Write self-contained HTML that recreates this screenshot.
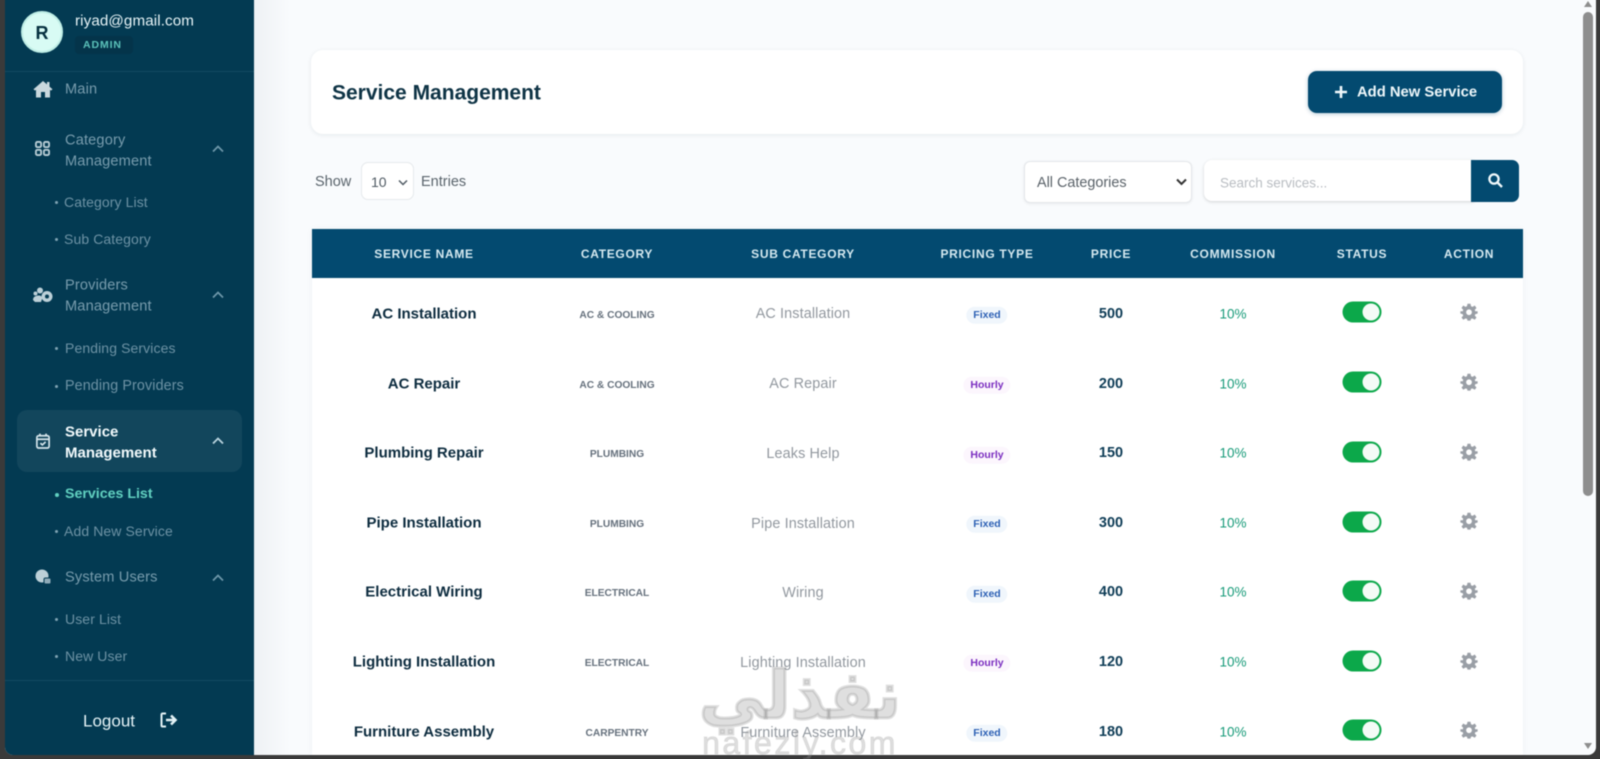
<!DOCTYPE html>
<html lang="en">
<head>
<meta charset="utf-8">
<title>Service Management</title>
<style>
html,body{margin:0;padding:0;width:1600px;height:759px;overflow:hidden;background:#3a3a3a;font-family:"Liberation Sans",sans-serif}
#p{position:absolute;left:0;top:0;width:1600px;height:759px;background:#3a3a3a;filter:blur(.4px)}
#m{position:absolute;left:5px;top:-10px;width:1591px;height:765px;background:#f9fbfd;border-radius:0 0 8px 8px;overflow:hidden}
.a{position:absolute;white-space:nowrap;transform:translateY(-50%);line-height:1}
.c{position:absolute;white-space:nowrap;transform:translate(-50%,-50%);line-height:1}
.s{color:#789cad;font-size:14.6px;letter-spacing:.15px}
.sub{color:#6d92a4;font-size:14px;letter-spacing:.1px}
.dot{position:absolute;width:3px;height:3px;border-radius:50%;background:#7fa3b3}
.h{color:#d5e9f0;font-size:12px;font-weight:700;letter-spacing:.7px}
.n{color:#0d2c3f;font-size:15px;font-weight:700;margin-top:1px}
.cat{color:#66717d;font-size:10.2px;font-weight:700;margin-top:1px}
.sc{color:#92989f;font-size:14.4px;letter-spacing:.12px;margin-top:1px}
.f{color:#2f62b5;font-size:10.5px;font-weight:700;background:#f0f6fc;padding:3px 7px;border-radius:9px}
.hr{color:#7b2fc0;font-size:10.5px;font-weight:700;background:#fcf6fd;padding:3px 7px;border-radius:9px}
.pr{color:#0f3d57;font-size:14.5px;font-weight:700}
.pc{color:#169a78;font-size:13.5px}
.t{position:absolute;width:39px;height:21px;border-radius:11px;background:#0ca84a;transform:translate(-50%,-50%)}
.t i{position:absolute;right:2px;top:2px;width:17px;height:17px;border-radius:50%;background:#f4fbf6}
svg{position:absolute;overflow:visible}
</style>
</head>
<body>
<div id="p">
<div id="m"></div>

<!-- sidebar -->
<div style="position:absolute;left:5px;top:-10px;width:249px;height:765px;background:#033a52;border-radius:0 0 0 8px"></div>
<div style="position:absolute;left:254px;top:-10px;width:36px;height:765px;background:linear-gradient(90deg,#eef1f4,#f9fbfd)"></div>
<div style="position:absolute;left:21px;top:11px;width:38px;height:38px;border-radius:50%;background:#d8fbf4;border:2px solid #bfeee6"></div>
<div class="c" style="left:42px;top:33px;font-size:18px;font-weight:700;color:#05303f">R</div>
<div class="a" style="left:75px;top:21px;font-size:15.2px;color:#e6f3f6;letter-spacing:.1px">riyad@gmail.com</div>
<div style="position:absolute;left:75px;top:36px;width:58px;height:18px;border-radius:4px;background:#04344a"></div>
<div class="a" style="left:83px;top:45px;font-size:10.5px;font-weight:700;color:#5cc3bb;letter-spacing:.9px">ADMIN</div>
<div style="position:absolute;left:5px;top:71px;width:249px;height:1px;background:#124a61"></div>

<svg style="left:33px;top:80px" width="20" height="18" viewBox="0 0 20 18"><path d="M10 1 0.5 9.2 2 10.6 3 9.8V17.5H8V12H12V17.5H17V9.8L18 10.6 19.5 9.2 16.5 6.6V2H14V4.4Z" fill="#c9d8de"/></svg>
<div class="a s" style="left:65px;top:90px">Main</div>

<svg style="left:35px;top:141px" width="15" height="15" viewBox="0 0 16 16" fill="none" stroke="#bcd0d8" stroke-width="1.9"><rect x="1" y="1" width="5.5" height="5.5" rx="1.4"/><rect x="9.5" y="1" width="5.5" height="5.5" rx="1.4"/><rect x="1" y="9.5" width="5.5" height="5.5" rx="1.4"/><rect x="9.5" y="9.5" width="5.5" height="5.5" rx="1.4"/></svg>
<div class="a s" style="left:65px;top:141px">Category</div>
<div class="a s" style="left:65px;top:162px">Management</div>
<svg style="left:212px;top:145px" width="12" height="8" viewBox="0 0 12 8" fill="none" stroke="#6f98aa" stroke-width="1.7"><path d="M1 6.5 6 1.5 11 6.5"/></svg>
<div class="dot" style="left:55px;top:201px"></div><div class="a sub" style="left:64px;top:202px">Category List</div>
<div class="dot" style="left:55px;top:238px"></div><div class="a sub" style="left:64px;top:239px">Sub Category</div>

<svg style="left:33px;top:287px" width="20" height="17" viewBox="0 0 20 17" fill="#bcd0d8"><circle cx="7" cy="3.5" r="3"/><circle cx="2.5" cy="6.5" r="2"/><path d="M0 13C0 9.500 3 8.500 6 8.500 8 8.500 9 9.500 9 12L8 15H2Z"/><circle cx="14" cy="9.500" r="5.500"/><circle cx="14" cy="9.500" r="2" fill="#033a52"/></svg>
<div class="a s" style="left:65px;top:286px">Providers</div>
<div class="a s" style="left:65px;top:307px">Management</div>
<svg style="left:212px;top:291px" width="12" height="8" viewBox="0 0 12 8" fill="none" stroke="#6f98aa" stroke-width="1.7"><path d="M1 6.5 6 1.5 11 6.500"/></svg>
<div class="dot" style="left:55px;top:347px"></div><div class="a sub" style="left:65px;top:348px">Pending Services</div>
<div class="dot" style="left:55px;top:385px"></div><div class="a" style="left:65px;top:386px;color:#6d92a4;font-size:14.3px;letter-spacing:.12px">Pending Providers</div>

<div style="position:absolute;left:17px;top:410px;width:225px;height:62px;border-radius:10px;background:#12465c"></div>
<svg style="left:36px;top:433px" width="14" height="16" viewBox="0 0 16 18" fill="none" stroke="#d6e6ec" stroke-width="1.900"><rect x="1" y="3" width="14" height="14" rx="2"/><path d="M1 7H15M4.500 0.500V3.500M11.500 0.500V3.500M5 11.500 7.300 13.500 11 10"/></svg>
<div class="a" style="left:65px;top:432px;font-size:15px;font-weight:700;color:#f2fafc">Service</div>
<div class="a" style="left:65px;top:453px;font-size:15px;font-weight:700;color:#f2fafc">Management</div>
<svg style="left:212px;top:437px" width="12" height="8" viewBox="0 0 12 8" fill="none" stroke="#b9d4de" stroke-width="1.800"><path d="M1 6.500 6 1.500 11 6.500"/></svg>
<div class="dot" style="left:55px;top:493px;background:#61d0c0;width:4px;height:4px"></div>
<div class="a" style="left:65px;top:494px;font-size:14.200px;font-weight:700;color:#61d0c0">Services List</div>
<div class="dot" style="left:55px;top:530px"></div><div class="a sub" style="left:64px;top:531px">Add New Service</div>

<svg style="left:35px;top:569px" width="17" height="16" viewBox="0 0 17 16"><circle cx="7" cy="7" r="6.500" fill="#bcd0d8"/><rect x="9" y="9" width="7" height="6" rx="1.500" fill="#8fabb8" stroke="#033a52"/></svg>
<div class="a s" style="left:65px;top:578px">System Users</div>
<svg style="left:212px;top:574px" width="12" height="8" viewBox="0 0 12 8" fill="none" stroke="#6f98aa" stroke-width="1.700"><path d="M1 6.500 6 1.500 11 6.500"/></svg>
<div class="dot" style="left:55px;top:618px"></div><div class="a sub" style="left:65px;top:619px">User List</div>
<div class="dot" style="left:55px;top:655px"></div><div class="a sub" style="left:65px;top:656px">New User</div>
<div style="position:absolute;left:5px;top:680px;width:249px;height:1px;background:#124a61"></div>
<div class="a" style="left:83px;top:721px;font-size:17px;color:#e3f1f5">Logout</div>
<svg style="left:160px;top:712px" width="18" height="16" viewBox="0 0 18 16" fill="none" stroke="#e3f1f5" stroke-width="2"><path d="M6 1.500H2.500A1 1 0 0 0 1.500 2.500V13.500A1 1 0 0 0 2.500 14.500H6"/><path d="M6 8H15M11 3.500 15.500 8 11 12.500" stroke-width="2.600"/></svg>

<!-- header card -->
<div style="position:absolute;left:311px;top:50px;width:1212px;height:84px;border-radius:12px;background:#fff;box-shadow:0 1px 5px rgba(20,50,70,.09)"></div>
<div class="a" style="left:332px;top:93px;font-size:21px;font-weight:700;color:#0e3345">Service Management</div>
<div style="position:absolute;left:1308px;top:71px;width:194px;height:42px;border-radius:9px;background:#034a70;box-shadow:0 1px 4px rgba(3,74,112,.3)"></div>
<svg style="left:1334px;top:85px" width="14" height="14" viewBox="0 0 14 14"><path d="M7 1V13M1 7H13" stroke="#f0f8fb" stroke-width="2.600"/></svg>
<div class="a" style="left:1357px;top:93px;font-size:14.800px;font-weight:700;color:#eef7fa">Add New Service</div>

<!-- filters -->
<div class="a" style="left:315px;top:182px;font-size:14.500px;color:#5a646c">Show</div>
<div style="position:absolute;left:361px;top:162px;width:51px;height:36px;border:1px solid #e6e9ec;border-radius:7px;background:#fff"></div>
<div class="a" style="left:371px;top:182px;font-size:14px;color:#4f5a63">10</div>
<svg style="left:398px;top:179px" width="10" height="7" viewBox="0 0 10 7" fill="none" stroke="#4f5a63" stroke-width="1.500"><path d="M1 1.500 5 5.500 9 1.500"/></svg>
<div class="a" style="left:421px;top:182px;font-size:14.500px;color:#5a646c">Entries</div>

<div style="position:absolute;left:1024px;top:161px;width:166px;height:40px;border:1px solid #e4e7ea;border-radius:6px;background:#fff;box-shadow:0 1px 3px rgba(0,0,0,.07)"></div>
<div class="a" style="left:1037px;top:182.500px;font-size:14.400px;color:#5a6269">All Categories</div>
<svg style="left:1176px;top:178px" width="11" height="8" viewBox="0 0 11 8" fill="none" stroke="#333" stroke-width="2"><path d="M1 1.500 5.500 6 10 1.500"/></svg>
<div style="position:absolute;left:1204px;top:160px;width:270px;height:41px;border-radius:8px 0 0 8px;background:#fff;box-shadow:0 1px 3px rgba(0,0,0,.16)"></div>
<div class="a" style="left:1220px;top:182.500px;font-size:13.500px;color:#b9bdc2">Search services...</div>
<div style="position:absolute;left:1471px;top:160px;width:48px;height:42px;border-radius:0 7px 7px 0;background:#034a70"></div>
<svg style="left:1488px;top:173px" width="15" height="15" viewBox="0 0 15 15" fill="none" stroke="#f0f8fb" stroke-width="2.300"><circle cx="6" cy="6" r="4.600"/><path d="M9.500 9.500 14 14"/></svg>

<!-- table -->
<div style="position:absolute;left:312px;top:229px;width:1211px;height:526px;background:#fff;box-shadow:0 0 6px rgba(20,50,70,.05)"></div>
<div style="position:absolute;left:312px;top:229px;width:1211px;height:49px;background:#034a70"></div>
<div class="c h" style="left:424px;top:254px">SERVICE NAME</div>
<div class="c h" style="left:617px;top:254px">CATEGORY</div>
<div class="c h" style="left:803px;top:254px">SUB CATEGORY</div>
<div class="c h" style="left:987px;top:254px">PRICING TYPE</div>
<div class="c h" style="left:1111px;top:254px">PRICE</div>
<div class="c h" style="left:1233px;top:254px">COMMISSION</div>
<div class="c h" style="left:1362px;top:254px">STATUS</div>
<div class="c h" style="left:1469px;top:254px">ACTION</div>

<div class="c n" style="left:424px;top:313px">AC Installation</div>
<div class="c cat" style="left:617px;top:315px">AC &amp; COOLING</div>
<div class="c sc" style="left:803px;top:313px">AC Installation</div>
<div class="c f" style="left:987px;top:315px">Fixed</div>
<div class="c pr" style="left:1111px;top:314px">500</div>
<div class="c pc" style="left:1233px;top:314px">10%</div>
<div class="t" style="left:1362px;top:312px"><i></i></div>
<svg style="left:1460px;top:303px" width="18" height="18" viewBox="0 0 24 24"><use href="#g"/></svg>

<div class="c n" style="left:424px;top:383px">AC Repair</div>
<div class="c cat" style="left:617px;top:385px">AC &amp; COOLING</div>
<div class="c sc" style="left:803px;top:383px">AC Repair</div>
<div class="c hr" style="left:987px;top:385px">Hourly</div>
<div class="c pr" style="left:1111px;top:384px">200</div>
<div class="c pc" style="left:1233px;top:384px">10%</div>
<div class="t" style="left:1362px;top:382px"><i></i></div>
<svg style="left:1460px;top:373px" width="18" height="18" viewBox="0 0 24 24"><use href="#g"/></svg>

<div class="c n" style="left:424px;top:452px">Plumbing Repair</div>
<div class="c cat" style="left:617px;top:454px">PLUMBING</div>
<div class="c sc" style="left:803px;top:453px">Leaks Help</div>
<div class="c hr" style="left:987px;top:455px">Hourly</div>
<div class="c pr" style="left:1111px;top:453px">150</div>
<div class="c pc" style="left:1233px;top:453px">10%</div>
<div class="t" style="left:1362px;top:452px"><i></i></div>
<svg style="left:1460px;top:443px" width="18" height="18" viewBox="0 0 24 24"><use href="#g"/></svg>

<div class="c n" style="left:424px;top:522px">Pipe Installation</div>
<div class="c cat" style="left:617px;top:524px">PLUMBING</div>
<div class="c sc" style="left:803px;top:523px">Pipe Installation</div>
<div class="c f" style="left:987px;top:524px">Fixed</div>
<div class="c pr" style="left:1111px;top:523px">300</div>
<div class="c pc" style="left:1233px;top:523px">10%</div>
<div class="t" style="left:1362px;top:522px"><i></i></div>
<svg style="left:1460px;top:512px" width="18" height="18" viewBox="0 0 24 24"><use href="#g"/></svg>

<div class="c n" style="left:424px;top:591px">Electrical Wiring</div>
<div class="c cat" style="left:617px;top:593px">ELECTRICAL</div>
<div class="c sc" style="left:803px;top:592px">Wiring</div>
<div class="c f" style="left:987px;top:594px">Fixed</div>
<div class="c pr" style="left:1111px;top:592px">400</div>
<div class="c pc" style="left:1233px;top:592px">10%</div>
<div class="t" style="left:1362px;top:591px"><i></i></div>
<svg style="left:1460px;top:582px" width="18" height="18" viewBox="0 0 24 24"><use href="#g"/></svg>

<div class="c n" style="left:424px;top:661px">Lighting Installation</div>
<div class="c cat" style="left:617px;top:663px">ELECTRICAL</div>
<div class="c sc" style="left:803px;top:662px">Lighting Installation</div>
<div class="c hr" style="left:987px;top:663px">Hourly</div>
<div class="c pr" style="left:1111px;top:662px">120</div>
<div class="c pc" style="left:1233px;top:662px">10%</div>
<div class="t" style="left:1362px;top:661px"><i></i></div>
<svg style="left:1460px;top:652px" width="18" height="18" viewBox="0 0 24 24"><use href="#g"/></svg>

<div class="c n" style="left:424px;top:731px">Furniture Assembly</div>
<div class="c cat" style="left:617px;top:733px">CARPENTRY</div>
<div class="c sc" style="left:803px;top:732px">Furniture Assembly</div>
<div class="c f" style="left:987px;top:733px">Fixed</div>
<div class="c pr" style="left:1111px;top:732px">180</div>
<div class="c pc" style="left:1233px;top:732px">10%</div>
<div class="t" style="left:1362px;top:730px"><i></i></div>
<svg style="left:1460px;top:721px" width="18" height="18" viewBox="0 0 24 24"><use href="#g"/></svg>

<svg width="0" height="0" style="left:0;top:0"><defs><path id="g" fill="#9a9fa6" fill-rule="evenodd" d="M10 1H14L14.700 4.300 16.800 5.200 19.600 3.400 22 6.600 19.700 9 20.300 11H23.500V14L20.300 15 19.700 16.800 22 19.400 19.600 22.400 16.800 20.600 14.700 21 14 23.500H10L9.300 21 7.200 20.600 4.400 22.400 2 19.400 4.300 16.800 3.700 15 0.500 14V11L3.700 11 4.300 9 2 6.600 4.400 3.400 7.200 5.200 9.300 4.300ZM12 8.500A3.800 3.800 0 1 0 12.010 8.500Z"/></defs></svg>

<!-- watermark -->
<div style="position:absolute;left:0;top:0;width:1600px;height:759px;overflow:hidden">
<div class="c" dir="rtl" style="left:800px;top:690px;font-family:'Noto Sans CJK SC','DejaVu Sans',sans-serif;font-size:66px;font-weight:700;color:rgba(150,150,150,.3);-webkit-text-stroke:3px rgba(150,150,150,.3)">نفذلي</div>
<div class="c" style="left:800px;top:743px;font-size:32px;font-weight:400;letter-spacing:2.500px;color:rgba(150,150,150,.3);-webkit-text-stroke:1px rgba(150,150,150,.2)">nafezly.com</div>
</div>

<!-- scrollbar -->
<svg style="left:1583px;top:0" width="10" height="10" viewBox="0 0 10 10"><path d="M5 1 9 7H1Z" fill="#8e8e8e"/></svg>
<div style="position:absolute;left:1583px;top:12px;width:10px;height:484px;border-radius:5px;background:#8e8e8e"></div>
<svg style="left:1583px;top:741px" width="10" height="10" viewBox="0 0 10 10"><path d="M5 8 9 2H1Z" fill="#8e8e8e"/></svg>
</div>
</body>
</html>
